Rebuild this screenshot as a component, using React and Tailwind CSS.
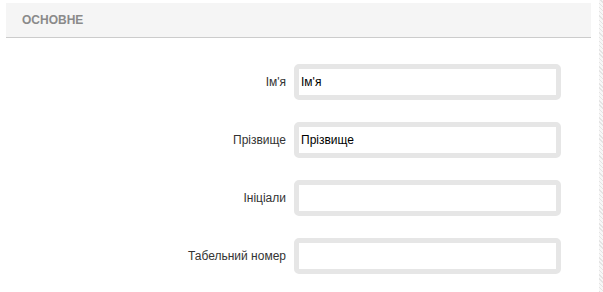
import React from 'react';

const fields = [
  { label: "Ім'я", value: "Ім'я" },
  { label: 'Прізвище', value: 'Прізвище' },
  { label: 'Ініціали', value: '' },
  { label: 'Табельний номер', value: '' },
];

function FieldRow({ label, value }) {
  return (
    <div className="flex items-center h-[36px]">
      <label className="w-[280px] text-right text-[12px] text-[#333]">{label}</label>
      <div className="ml-[8px] w-[267px] h-[36px] border-[5px] border-[#e6e6e6] rounded-[5px] bg-white flex items-center px-[2px]">
        <input
          className="w-full outline-none text-[12px] text-black bg-transparent font-['Liberation_Sans',Arial,sans-serif]"
          defaultValue={value}
        />
      </div>
    </div>
  );
}

export default function App() {
  return (
    <div className="flex w-[603px] h-[292px] bg-white font-['Liberation_Sans',Arial,sans-serif]">
      <div className="flex-1 pt-[3px] pl-[6px] pr-[8px]">
        <div className="h-[35px] bg-[#f5f5f5] border-b border-[#cccccc] flex items-center pl-[16px]">
          <span className="text-[12px] font-bold text-[#8a8a8a]">ОСНОВНЕ</span>
        </div>
        <div className="flex flex-col gap-[22px] mt-[26px]">
          {fields.map((f) => (
            <FieldRow key={f.label} label={f.label} value={f.value} />
          ))}
        </div>
      </div>
      <div className="w-[4px] h-full bg-[repeating-linear-gradient(45deg,#e4e4e4_0px,#e4e4e4_1px,#f7f7f7_1px,#f7f7f7_3px)]" />
    </div>
  );
}
